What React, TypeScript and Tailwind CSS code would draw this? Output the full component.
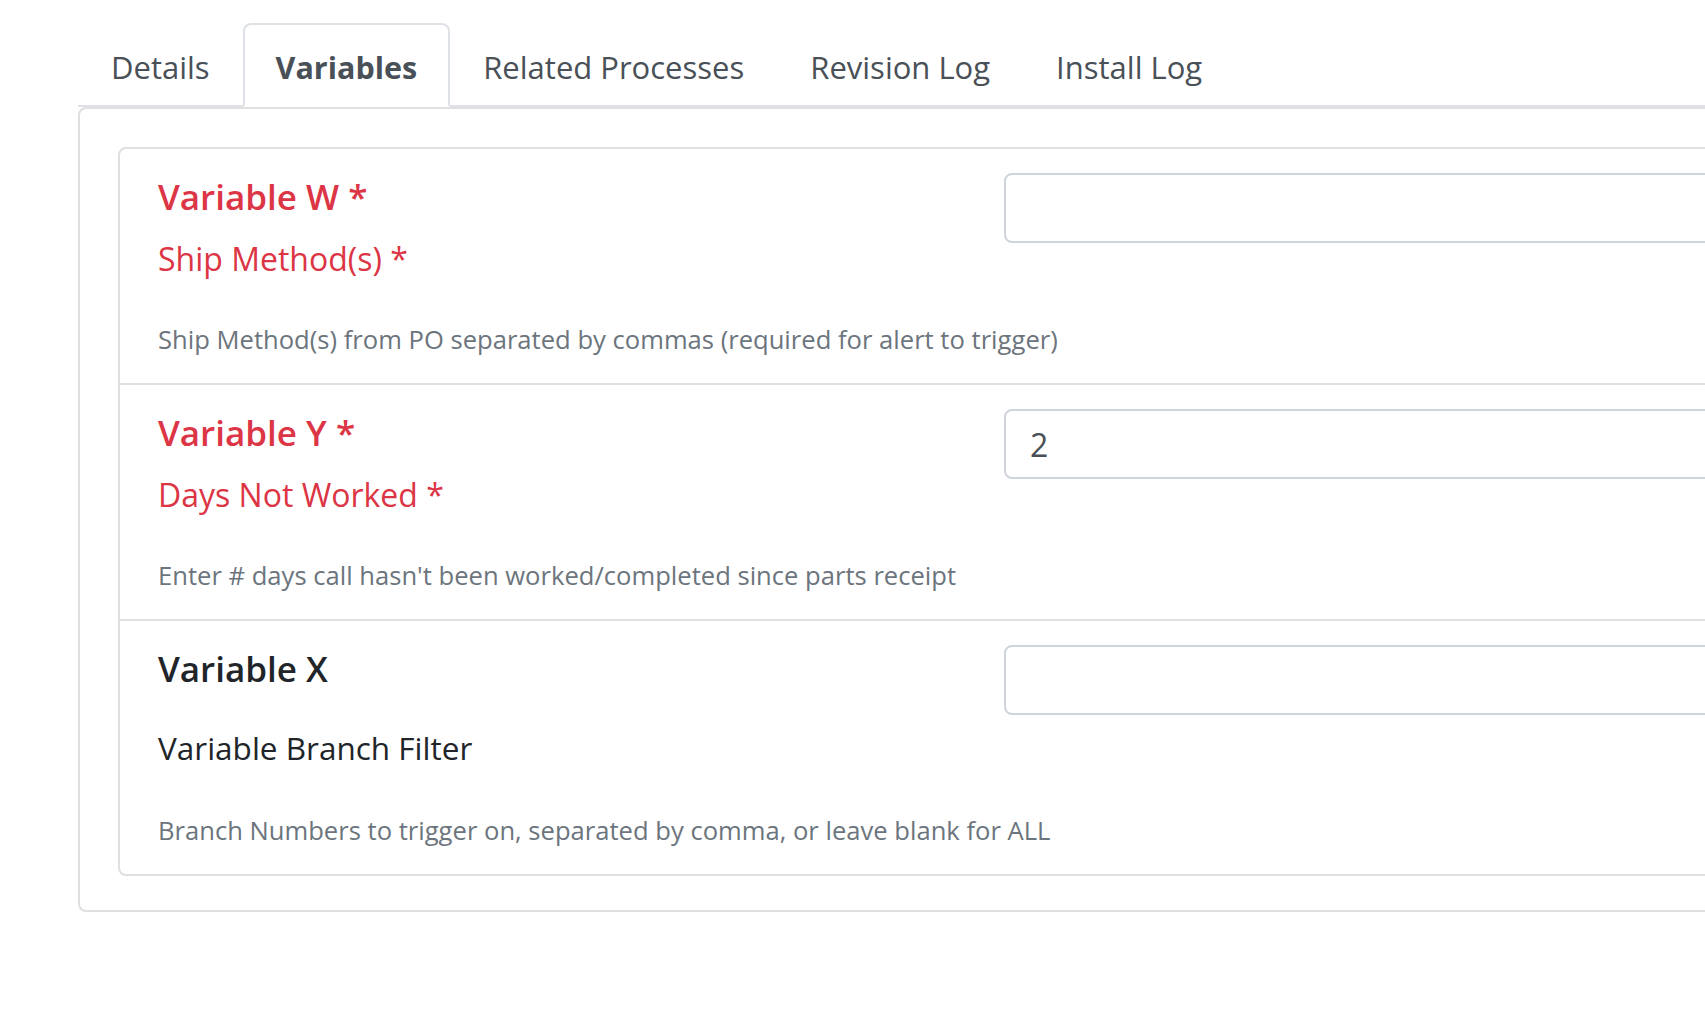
import React from "react";

const tabs = ["Details", "Variables", "Related Processes", "Revision Log", "Install Log"];

type Variable = {
  name: string;
  label: string;
  help: string;
  value: string;
  required: boolean;
  labelGap: string;
};

const variables: Variable[] = [
  {
    name: "Variable W",
    label: "Ship Method(s)",
    help: "Ship Method(s) from PO separated by commas (required for alert to trigger)",
    value: "",
    required: true,
    labelGap: "mt-[14px]",
  },
  {
    name: "Variable Y",
    label: "Days Not Worked",
    help: "Enter # days call hasn't been worked/completed since parts receipt",
    value: "2",
    required: true,
    labelGap: "mt-[14px]",
  },
  {
    name: "Variable X",
    label: "Variable Branch Filter",
    help: "Branch Numbers to trigger on, separated by comma, or leave blank for ALL",
    value: "",
    required: false,
    labelGap: "mt-[31px]",
  },
];

function VariableRow({ v, last }: { v: Variable; last: boolean }) {
  const titleColor = v.required ? "text-[#dc3545]" : "text-[#212529]";
  return (
    <div className={`px-[38px] pt-[24px] pb-[24px] ${last ? "" : "border-b-2 border-[#dfdfdf]"}`}>
      <div className="flex">
        <div className="w-[846px] shrink-0">
          <h5 className={`text-[35px] leading-[48px] font-semibold ${titleColor}`}>
            {v.name}
            {v.required && " *"}
          </h5>
          <div
            className={`${v.labelGap} ${v.required ? "text-[32px]" : "text-[31.5px]"} leading-[48px] ${titleColor}`}
          >
            {v.label}
            {v.required && " *"}
          </div>
        </div>
        <div className="flex-1">
          <input
            type="text"
            defaultValue={v.value}
            className="w-full h-[70px] rounded-[8px] border-2 border-[#ced4da] bg-white px-[24px] text-[32px] text-[#495057] outline-none"
          />
        </div>
      </div>
      <p
        className={`${v.required ? "mt-[38px]" : "mt-[40px]"} text-[25.6px] leading-[38px] text-[#6c757d] whitespace-nowrap`}
      >
        {v.help}
      </p>
    </div>
  );
}

export default function App() {
  return (
    <div
      className="w-[1705px] h-[1025px] overflow-hidden bg-white"
      style={{ fontFamily: '"Open Sans", "Noto Sans", sans-serif' }}
    >
      <div className="w-[1900px] pl-[78px] pt-[23px]">
        <ul className="flex border-b-2 border-[#dee2e6]">
          {tabs.map((t) => {
            const active = t === "Variables";
            return (
              <li key={t} className="-mb-[2px]">
                <a
                  className={`block px-[31px] pt-[18px] pb-[14px] leading-[48px] text-[#495057] border-2 rounded-t-[8px] ${
                    active
                      ? "text-[30.5px] font-bold border-[#dee2e6] border-b-white bg-white"
                      : "text-[31px] border-transparent"
                  }`}
                >
                  {t}
                </a>
              </li>
            );
          })}
        </ul>
        <div className="border-2 border-[#dfdfdf] rounded-[8px] px-[38px] pt-[38px] pb-[34px]">
          <div className="border-2 border-[#dfdfdf] rounded-[8px]">
            {variables.map((v, i) => (
              <VariableRow key={v.name} v={v} last={i === variables.length - 1} />
            ))}
          </div>
        </div>
      </div>
    </div>
  );
}
